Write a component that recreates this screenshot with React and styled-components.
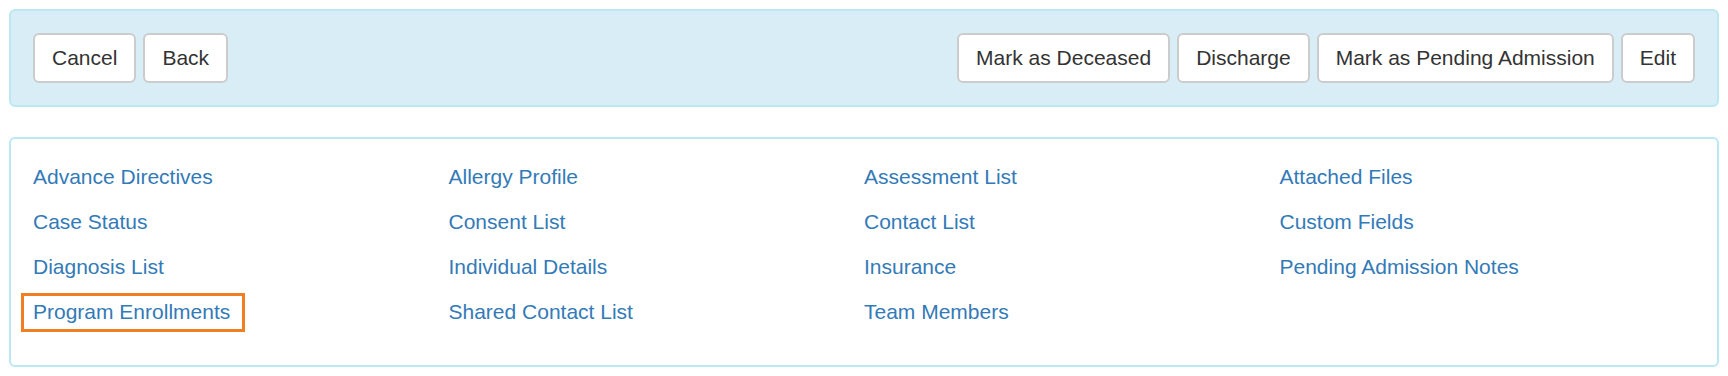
import styled, { createGlobalStyle } from "styled-components"

const GlobalStyle = createGlobalStyle`
	body {
		margin: 0;
		background: #fff;
		font-family: "Liberation Sans", Arial, sans-serif;
		font-size: 21px;
		line-height: 30px;
		color: #333;
	}
`

const leftActions = ["Cancel", "Back"]
const rightActions = ["Mark as Deceased", "Discharge", "Mark as Pending Admission", "Edit"]

const columns = [
	["Advance Directives", "Case Status", "Diagnosis List", "Program Enrollments"],
	["Allergy Profile", "Consent List", "Individual Details", "Shared Contact List"],
	["Assessment List", "Contact List", "Insurance", "Team Members"],
	["Attached Files", "Custom Fields", "Pending Admission Notes"],
]

const App = () => {
	return (
		<Page>
			<GlobalStyle />
			<Toolbar>
				<ButtonGroup>
					{leftActions.map((label) => (
						<Button key={label}>{label}</Button>
					))}
				</ButtonGroup>
				<ButtonGroup>
					{rightActions.map((label) => (
						<Button key={label}>{label}</Button>
					))}
				</ButtonGroup>
			</Toolbar>
			<LinkPanel>
				{columns.map((col, i) => (
					<LinkColumn key={i}>
						{col.map((label) => (
							<li key={label}>
								<NavLink href="#" $highlight={label === "Program Enrollments"}>
									{label}
								</NavLink>
							</li>
						))}
					</LinkColumn>
				))}
			</LinkPanel>
		</Page>
	)
}

const Page = styled.div`
	padding: 9px;
	display: flex;
	flex-direction: column;
	gap: 30px;
`

const Toolbar = styled.div`
	display: flex;
	justify-content: space-between;
	align-items: center;
	padding: 22px;
	background: #d9edf7;
	border: 2px solid #bce8f1;
	border-radius: 6px;
`

const ButtonGroup = styled.div`
	display: flex;
	gap: 7px;
`

const Button = styled.button`
	font-family: inherit;
	font-size: 21px;
	line-height: 30px;
	padding: 8px 17px;
	color: #333;
	background: #fff;
	border: 2px solid #ccc;
	border-radius: 6px;
	cursor: pointer;
	white-space: nowrap;
`

const LinkPanel = styled.div`
	display: grid;
	grid-template-columns: repeat(4, 1fr);
	padding: 23px 22px 38px;
	border: 2px solid #bce8f1;
	border-radius: 6px;
	background: #fff;
`

const LinkColumn = styled.ul`
	list-style: none;
	margin: 0;
	padding: 0;
	display: flex;
	flex-direction: column;
	gap: 15px;
`

const NavLink = styled.a`
	position: relative;
	display: inline-block;
	color: #337ab7;
	text-decoration: none;

	${(p) =>
		p.$highlight &&
		`
		&::after {
			content: "";
			position: absolute;
			top: -4px;
			bottom: -5px;
			left: -12px;
			right: -15px;
			border: 3px solid #ef7f22;
		}
	`}
`

export default App
